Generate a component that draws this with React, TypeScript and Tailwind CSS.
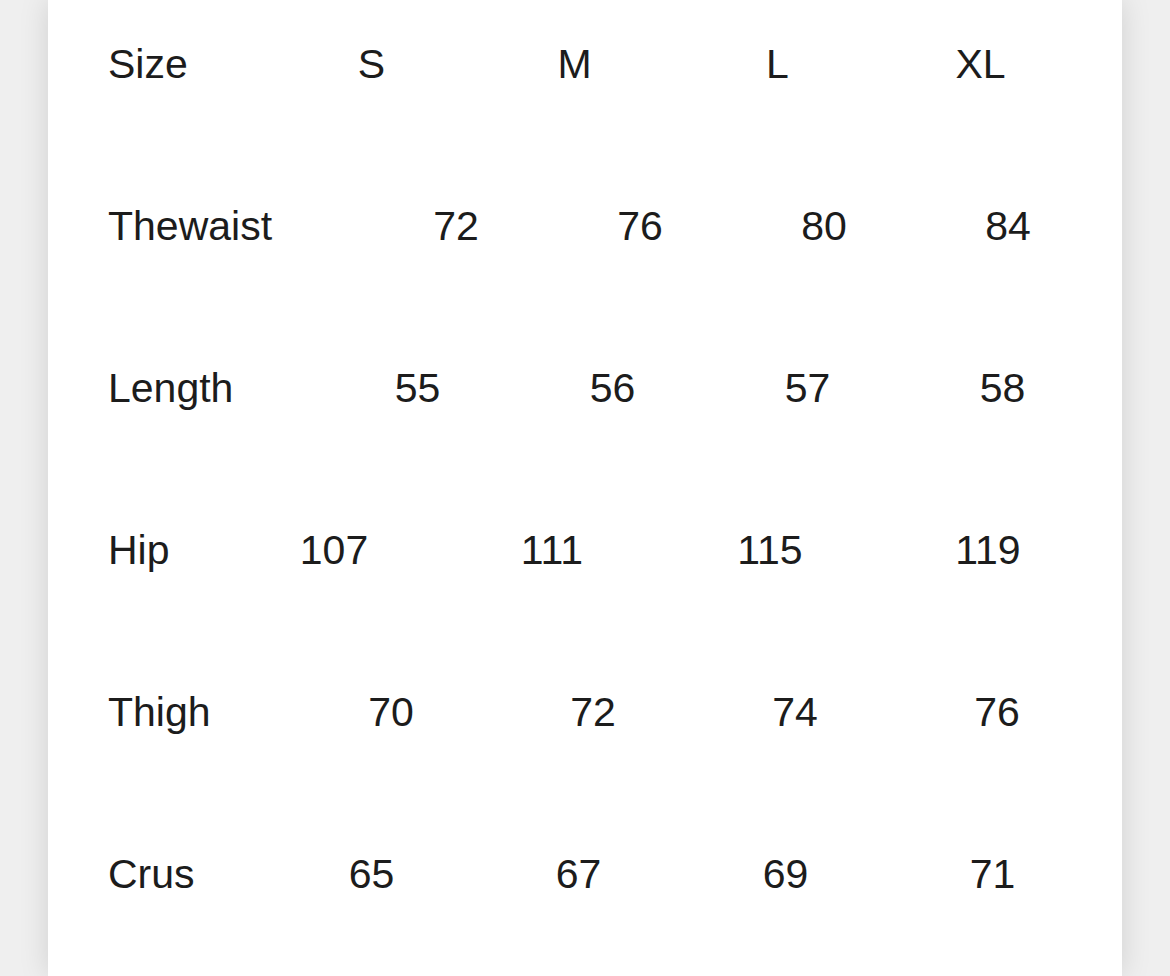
const rows = [
  { label: "Size", values: ["S", "M", "L", "XL"], labelClass: "w-[162px]", cellClass: "w-[203px]" },
  { label: "Thewaist", values: ["72", "76", "80", "84"], labelClass: "w-[256px]", cellClass: "w-[184px]" },
  { label: "Length", values: ["55", "56", "57", "58"], labelClass: "w-[212px]", cellClass: "w-[195px]" },
  { label: "Hip", values: ["107", "111", "115", "119"], labelClass: "w-[117px]", cellClass: "w-[218px]" },
  { label: "Thigh", values: ["70", "72", "74", "76"], labelClass: "w-[182px]", cellClass: "w-[202px]" },
  { label: "Crus", values: ["65", "67", "69", "71"], labelClass: "w-[160px]", cellClass: "w-[207px]" },
];

export default function App() {
  return (
    <div className="min-h-screen bg-[#efefef] px-[48px]">
      <div className="h-[976px] overflow-hidden bg-white shadow-[0_0_28px_rgba(0,0,0,0.13)] pl-[60px] pt-[43px] font-['Liberation_Sans',Arial,sans-serif] text-[41px] leading-[42px] text-[#1c1c1c]">
        <div className="flex flex-col gap-[120px]">
          {rows.map((row) => (
            <div key={row.label} className="flex">
              <div className={`${row.labelClass} shrink-0`}>{row.label}</div>
              {row.values.map((v, i) => (
                <div key={i} className={`${row.cellClass} shrink-0 text-center`}>
                  {v}
                </div>
              ))}
            </div>
          ))}
        </div>
      </div>
    </div>
  );
}
